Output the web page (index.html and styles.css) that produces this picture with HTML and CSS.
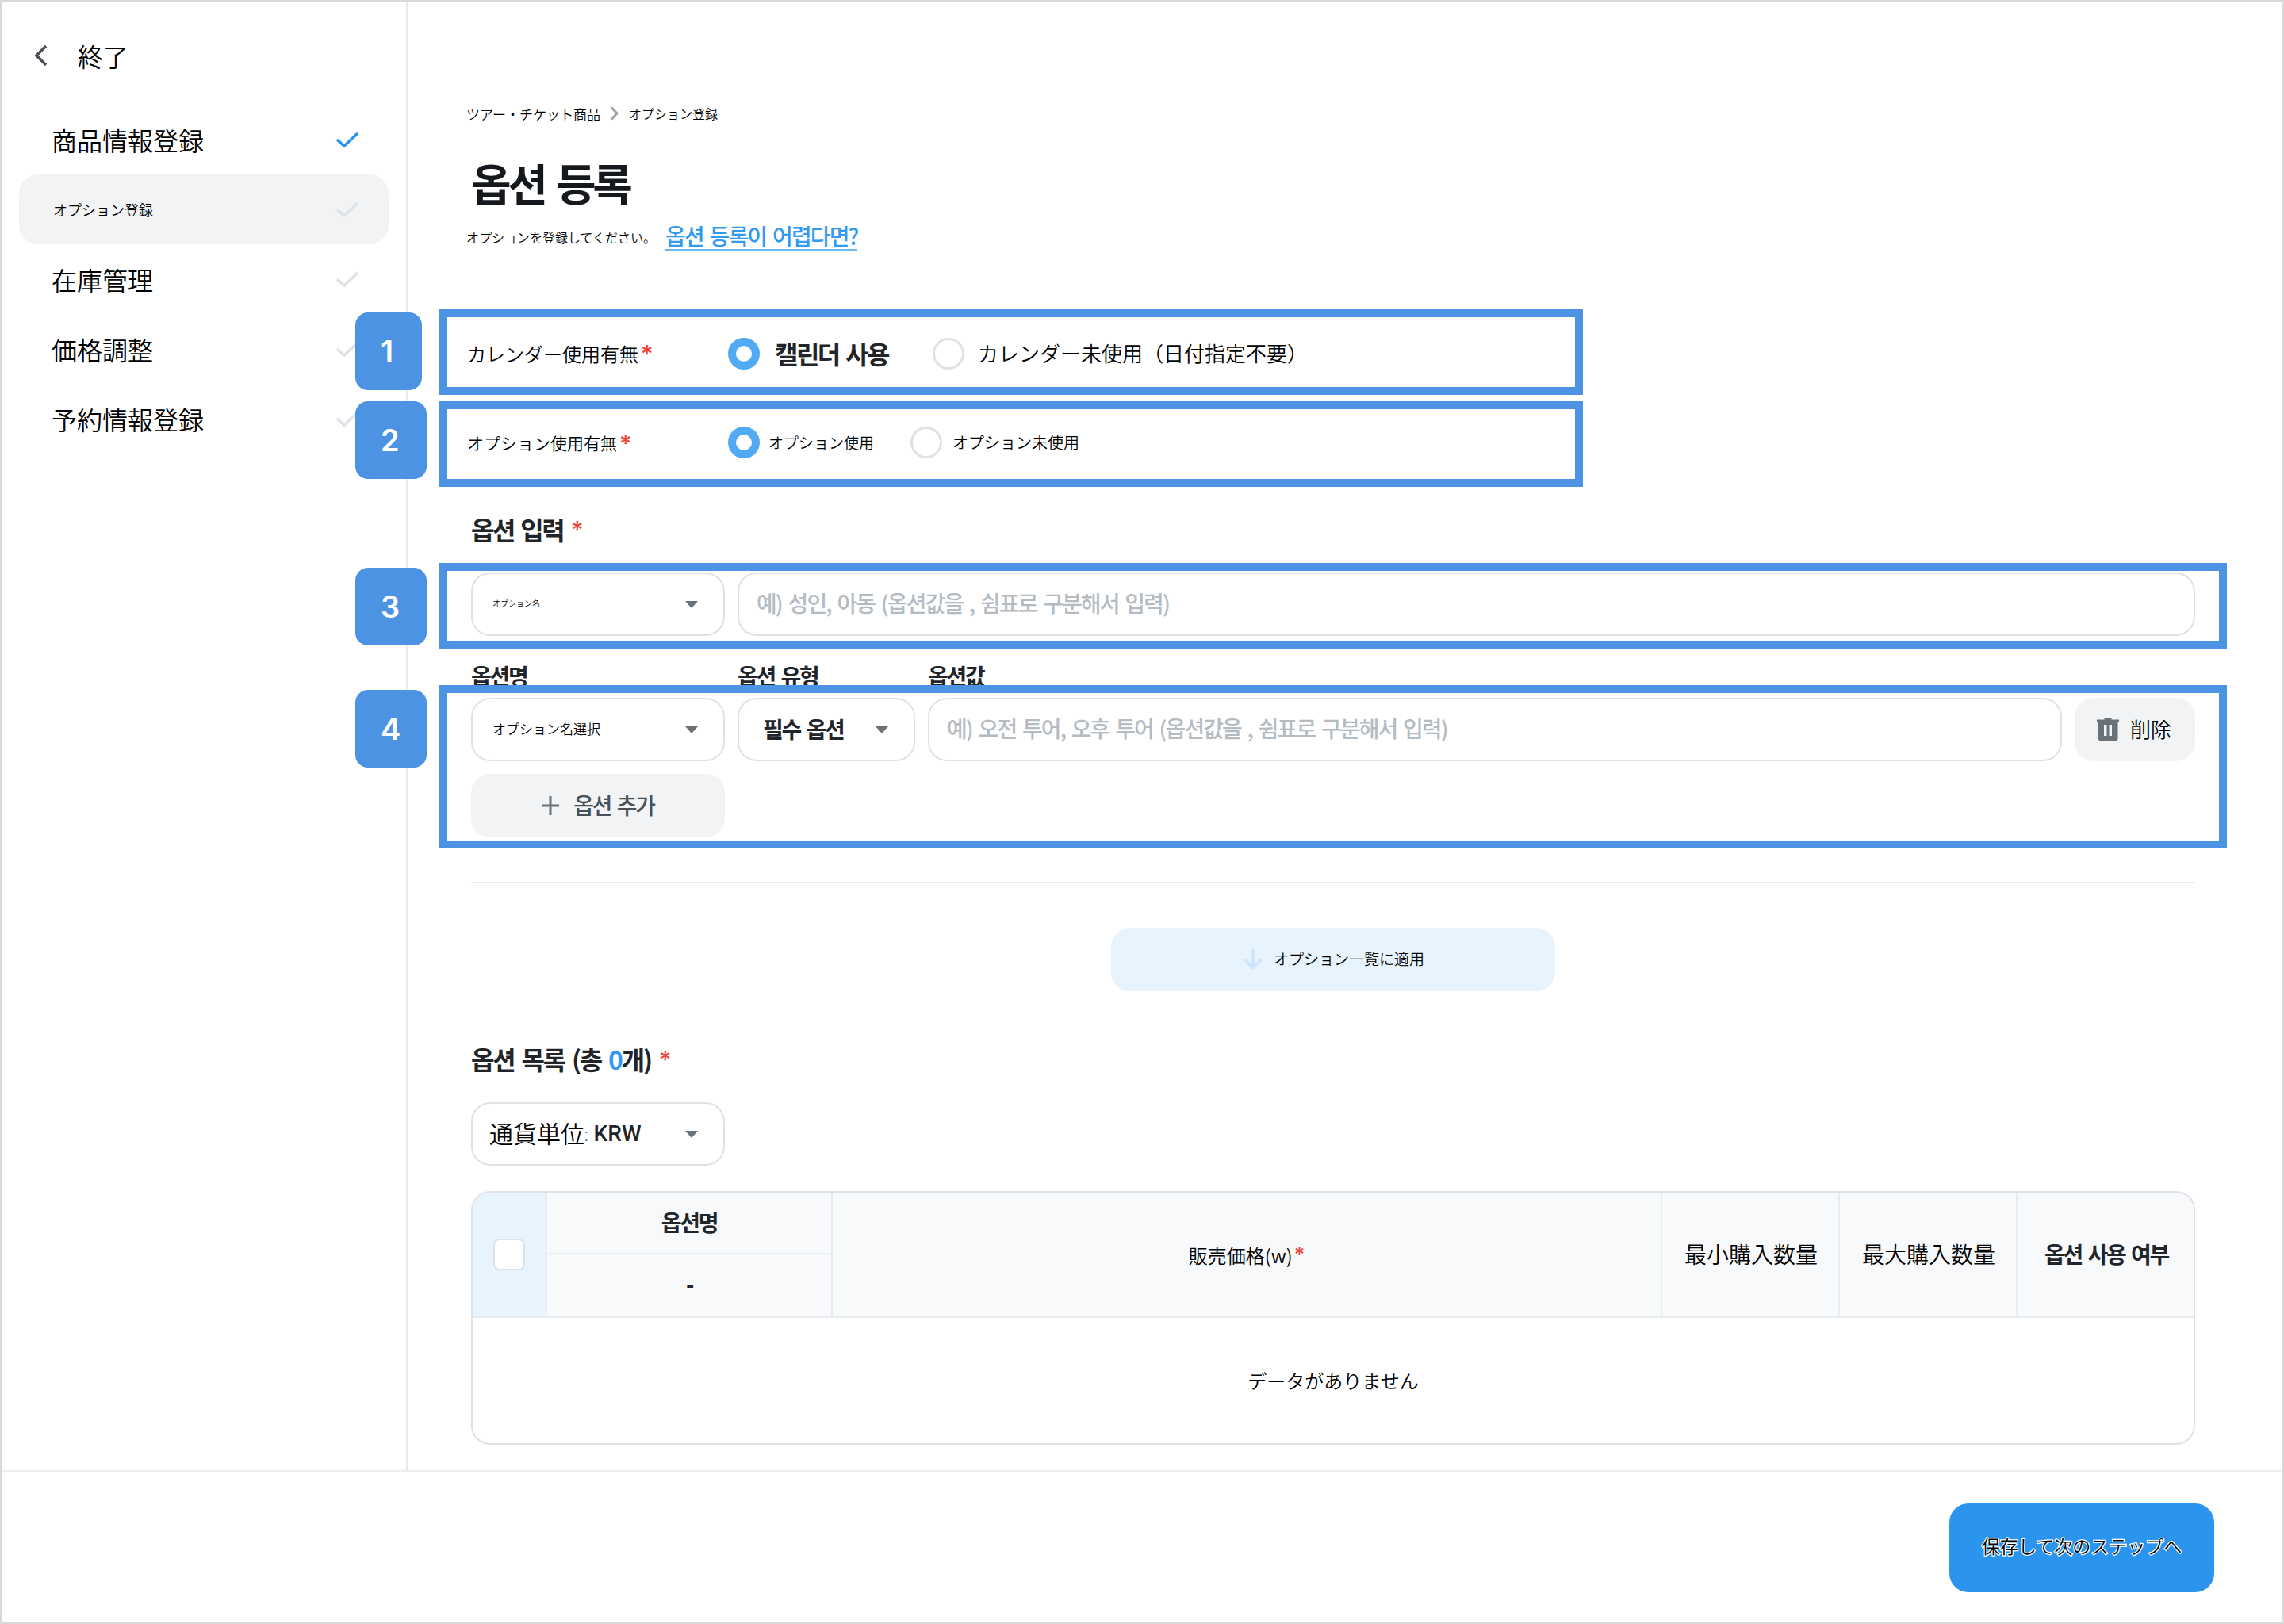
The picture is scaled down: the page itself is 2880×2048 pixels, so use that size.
FILE: index.html
```html
<!DOCTYPE html>
<html lang="ja">
<head>
  <meta charset="UTF-8">
  <meta name="viewport" content="width=device-width, initial-scale=1.0">
  <title>オプション登録</title>
  <link rel="stylesheet" href="styles.css">
</head>
<body>

  <div class="page">
    <div class="content">

      <!-- Sidebar -->
      <aside class="sidebar">
        <div class="sidebar-back">
          <svg width="18" height="28" viewBox="0 0 18 28" fill="none" stroke="#495057" stroke-width="3.6"><path d="M16 2L4 14l12 12"/></svg>
          <span>終了</span>
        </div>
        <nav class="menu">
          <div class="menu-item done">
            <span>商品情報登録</span>
            <svg class="check" viewBox="0 0 30 22"><path d="M2 11l9 8L28 3"/></svg>
          </div>
          <div class="menu-item active">
            <span>オプション登録</span>
            <svg class="check" viewBox="0 0 30 22"><path d="M2 11l9 8L28 3"/></svg>
          </div>
          <div class="menu-item">
            <span>在庫管理</span>
            <svg class="check" viewBox="0 0 30 22"><path d="M2 11l9 8L28 3"/></svg>
          </div>
          <div class="menu-item">
            <span>価格調整</span>
            <svg class="check" viewBox="0 0 30 22"><path d="M2 11l9 8L28 3"/></svg>
          </div>
          <div class="menu-item">
            <span>予約情報登録</span>
            <svg class="check" viewBox="0 0 30 22"><path d="M2 11l9 8L28 3"/></svg>
          </div>
        </nav>
      </aside>

      <main class="main">
        <div class="breadcrumb">
          <span class="crumb-parent">ツアー・チケット商品</span>
          <svg width="12" height="18" viewBox="0 0 12 18" fill="none" stroke="#9aa2aa" stroke-width="3"><path d="M2 1.5L9 9l-7 7.5"/></svg>
          <span>オプション登録</span>
        </div>
        <h1 class="ko">옵션 등록</h1>
        <div class="subtitle">
          <span>オプションを登録してください。</span>
          <a class="ko help-link">옵션 등록이 어렵다면?</a>
        </div>

        <!-- Step 1 -->
        <section class="step step-calendar">
          <span class="step-num narrow">1</span>
          <div class="field-label">カレンダー使用有無<span class="required">*</span></div>
          <div class="option option-first"><span class="radio checked"></span><span class="ko text">캘린더 사용</span></div>
          <div class="option"><span class="radio"></span><span class="text">カレンダー未使用（日付指定不要）</span></div>
        </section>

        <!-- Step 2 -->
        <section class="step step-option">
          <span class="step-num">2</span>
          <div class="field-label">オプション使用有無<span class="required">*</span></div>
          <div class="option option-first"><span class="radio checked"></span><span class="text">オプション使用</span></div>
          <div class="option"><span class="radio"></span><span class="text">オプション未使用</span></div>
        </section>

        <h2 class="ko title-input">옵션 입력<span class="required">*</span></h2>

        <!-- Step 3 -->
        <section class="step step-wide step-name">
          <span class="step-num">3</span>
          <div class="row">
            <div class="select select-name"><span class="tiny text">オプション名</span><i class="caret"></i></div>
            <div class="input ko">예) 성인, 아동 (옵션값을 , 쉼표로 구분해서 입력)</div>
          </div>
        </section>

        <div class="column-labels ko">
          <span>옵션명</span>
          <span>옵션 유형</span>
          <span>옵션값</span>
        </div>

        <!-- Step 4 -->
        <section class="step step-wide step-values">
          <span class="step-num">4</span>
          <div class="row">
            <div class="select select-name"><span class="text">オプション名選択</span><i class="caret"></i></div>
            <div class="select select-type"><span class="ko text">필수 옵션</span><i class="caret"></i></div>
            <div class="input ko">예) 오전 투어, 오후 투어 (옵션값을 , 쉼표로 구분해서 입력)</div>
            <div class="delete-btn">
              <svg width="28" height="28" viewBox="0 0 28 28"><path fill="#697179" fill-rule="evenodd" d="M0 1.500h9.500V0h9v1.500H28V4h-1.500v22.500L25 28H3.500L2 26.500V4H0zM9 8v14h3.500V8zm6.500 0v14H19V8z"/></svg>
              <span class="text">削除</span>
            </div>
          </div>
          <div class="add-btn">
            <svg width="22" height="24" viewBox="0 0 22 24" stroke="#697179" stroke-width="3"><path d="M11 0v24M0 12h22"/></svg>
            <span class="ko text">옵션 추가</span>
          </div>
        </section>

        <hr class="divider">

        <div class="apply-btn">
          <svg width="24" height="26" viewBox="0 0 24 26" fill="none" stroke="#cae6fd" stroke-width="3.6"><path d="M12 0v23M1.500 13L12 23.500 22.500 13"/></svg>
          <span class="text">オプション一覧に適用</span>
        </div>

        <h2 class="ko title-list">옵션 목록 (총 <em>0</em>개)<span class="required">*</span></h2>

        <div class="select select-currency">
          <span class="text">通貨単位</span><span class="currency"><small>:</small> KRW</span><i class="caret"></i>
        </div>

        <div class="table">
          <div class="table-head">
            <div class="cell cell-check"><span class="checkbox"></span></div>
            <div class="cell cell-name ko"><span>옵션명</span><span>-</span></div>
            <div class="cell cell-price">販売価格(w)<span class="required">*</span></div>
            <div class="cell">最小購入数量</div>
            <div class="cell">最大購入数量</div>
            <div class="cell ko">옵션 사용 여부</div>
          </div>
          <div class="table-empty">データがありません</div>
        </div>
      </main>
    </div>

    <footer class="footer">
      <div class="save-btn">保存して次のステップへ</div>
    </footer>
  </div>

</body>
</html>
```
FILE: styles.css
```css
* {
  margin: 0;
  padding: 0;
  box-sizing: border-box;
}

body {
  font-family: "Noto Sans CJK JP", sans-serif;
  font-weight: 350;
  color: #000;
  background: #fff;
}

.ko {
  font-family: "Noto Sans CJK KR", sans-serif;
  font-weight: 700;
  letter-spacing: -0.08em;
  word-spacing: 0.12em;
  color: #212529;
}

.page {
  width: 2880px;
  height: 2048px;
  border: 2px solid #d8d8d8;
  display: flex;
  flex-direction: column;
  overflow: hidden;
}

.content {
  display: flex;
  height: 1852px;
}

/* Sidebar */
.sidebar {
  width: 512px;
  flex: none;
  padding: 46px 22px 0;
  border-right: 2px solid #e9ecef;
}

.sidebar-back {
  display: flex;
  align-items: center;
  gap: 38px;
  height: 48px;
  padding-left: 18px;
  font-size: 32px;
}

.sidebar-back svg {
  margin-top: -4px;
}

.sidebar-back span {
  margin-top: -5px;
}

.menu {
  margin-top: 36px;
}

.menu-item {
  display: flex;
  justify-content: space-between;
  align-items: center;
  height: 88px;
  width: 466px;
  padding: 0 37px 0 41px;
  border-radius: 24px;
  font-size: 32px;
}

.menu-item.active {
  background: #f1f3f5;
  font-size: 18px;
  padding-left: 43px;
}

.check {
  width: 30px;
  height: 22px;
  margin-top: -1px;
  fill: none;
  stroke: #dee2e6;
  stroke-width: 3.6;
}

.done .check {
  stroke: #2b95ee;
}

/* Main column */
.main {
  flex: 1;
  min-width: 0;
  padding: 129px 110px 0 80px;
}

.breadcrumb {
  display: flex;
  align-items: center;
  height: 24px;
  margin-left: -6px;
  font-size: 16px;
}

.breadcrumb svg {
  margin: 0 12px 0 12px;
}

.crumb-parent {
  font-size: 17px;
}

h1.ko {
  height: 80px;
  margin-top: 34px;
  line-height: 80px;
  font-size: 55px;
  color: #15181c;
}

.subtitle {
  display: flex;
  align-items: center;
  height: 40px;
  margin: 10px 0 71px -6px;
  font-size: 16px;
}

.help-link {
  margin-left: 12px;
  height: 36px;
  line-height: 32px;
  font-size: 28px;
  font-weight: 500;
  letter-spacing: -0.067em;
  color: #339af0;
  border-bottom: 3px solid #6db6f4;
}

.required {
  align-self: flex-start;
  font-family: Inter, sans-serif;
  font-size: 30px;
  font-weight: 500;
  line-height: 1;
  letter-spacing: 0;
  color: #f04438;
}

/* Numbered, outlined steps */
.step {
  position: relative;
  width: 1442px;
  height: 108px;
  margin-left: -40px;
  padding-left: 25px;
  display: flex;
  align-items: center;
  background: #fff;
  border: 10px solid #4c93e4;
}

.step-num {
  position: absolute;
  left: -116px;
  top: -4px;
  width: 90px;
  height: 98px;
  padding-left: 32px;
  border-radius: 16px;
  background: #4c93e4;
  color: #fff;
  font-family: Inter, sans-serif;
  font-size: 38px;
  font-weight: 600;
  line-height: 99px;
}

.step-num.narrow {
  width: 84px;
  top: -6px;
}

.step-calendar {
  padding-top: 4px;
}

.step-option {
  margin-top: 8px;
  padding-bottom: 4px;
}

.step-option .step-num {
  top: -10px;
}

.text {
  margin-top: -3px;
}

.field-label {
  display: flex;
  width: 329px;
  margin-top: -2px;
  font-size: 24px;
}

.field-label .required {
  margin: 3px 0 0 3px;
}

.step-option .field-label {
  margin-top: 0;
  font-size: 21px;
}

.step-option .field-label .required {
  margin-top: 1px;
}

.option {
  display: flex;
  align-items: center;
  gap: 17px;
  font-size: 26px;
}

.option .ko {
  margin-left: 2px;
  font-size: 32px;
}

.option-first {
  width: 258px;
}

.step-option .option {
  gap: 13px;
  font-size: 20px;
}

.step-option .option-first {
  width: 230px;
  gap: 11px;
  font-size: 19px;
}

.step-option .text {
  margin-top: -1px;
}

.radio {
  width: 40px;
  height: 40px;
  border: 3px solid #dee2e6;
  border-radius: 50%;
}

.radio.checked {
  border: 10px solid #50abf4;
}

h2.ko {
  display: flex;
  height: 40px;
  line-height: 38px;
  font-size: 32px;
  white-space: pre;
}

h2 .required {
  margin: 5px 0 0 10px;
}

.title-input {
  margin: 34px 0 22px;
}

.step-wide {
  width: 2254px;
  flex-direction: column;
  align-items: flex-start;
  padding: 2px 30px 0;
}

.row {
  display: flex;
  gap: 16px;
  width: 100%;
}

.select,
.input {
  display: flex;
  align-items: center;
  height: 80px;
  border: 2px solid #dee2e6;
  border-radius: 24px;
}

.select {
  justify-content: space-between;
  padding: 0 32px 0 25px;
  font-size: 17px;
}

.select .ko {
  font-size: 28px;
}

.select-name {
  width: 320px;
}

.select-type {
  width: 224px;
  padding-left: 30px;
}

.tiny {
  font-size: 10px;
}

.caret {
  border: 8px solid transparent;
  border-top: 9px solid #697179;
  border-bottom: 0;
}

.input {
  flex: 1;
  padding: 0 0 4px 22px;
  font-size: 28px;
  font-weight: 500;
  letter-spacing: -0.069em;
  color: #b4bbc2;
}

.column-labels {
  display: grid;
  grid-template-columns: 336px 240px 1fr;
  height: 32px;
  margin-top: 14px;
  line-height: 40px;
  font-size: 28px;
}

.step-values {
  height: 206px;
  padding-top: 6px;
}

.delete-btn {
  display: flex;
  align-items: center;
  gap: 14px;
  width: 152px;
  padding-left: 28px;
  border-radius: 24px;
  background: #f1f3f5;
  font-size: 26px;
}

.add-btn {
  display: flex;
  justify-content: center;
  align-items: center;
  gap: 18px;
  width: 320px;
  height: 80px;
  margin-top: 16px;
  border-radius: 24px;
  background: #f1f3f5;
  font-size: 28px;
}

.add-btn .ko {
  font-weight: 500;
  color: #495057;
}

.divider {
  height: 2px;
  margin: 42px 0 56px;
  border: 0;
  background: #e9ecef;
}

.apply-btn {
  display: flex;
  justify-content: center;
  align-items: center;
  gap: 14px;
  width: 560px;
  height: 80px;
  margin: 0 auto;
  padding-left: 2px;
  border-radius: 24px;
  background: #e7f3fd;
  font-size: 19px;
}

.title-list {
  margin: 66px 0 34px;
}

.title-list.ko {
  letter-spacing: -0.068em;
}

.title-list em {
  font-style: normal;
  color: #339af0;
}

.select-currency {
  width: 320px;
  padding-left: 21px;
  font-size: 30px;
}

.select-currency .text {
  margin-top: -5px;
}

.currency {
  flex: 1;
  font-family: Roboto, sans-serif;
  font-size: 28px;
  font-weight: 500;
  margin-top: -2px;
  color: #212529;
}

.currency small {
  font-weight: 300;
  font-size: 22px;
}

/* Option table */
.table {
  height: 320px;
  margin-top: 32px;
  border: 2px solid #dee2e6;
  border-radius: 24px;
  overflow: hidden;
}

.table-head {
  display: grid;
  grid-template-columns: 94px 360px 1fr 224px 224px 222px;
  height: 158px;
  background: #f8f9fb;
  border-bottom: 2px solid #e9ecef;
}

.cell {
  display: flex;
  justify-content: center;
  align-items: center;
  padding: 0 0 2px 2px;
  font-size: 28px;
  border-right: 2px solid #e9ecef;
}

.cell:last-child {
  border-right: 0;
}

.cell-check {
  padding: 0;
  background: #e7f3fd;
}

.checkbox {
  width: 40px;
  height: 40px;
  border: 2px solid #dee2e6;
  border-radius: 8px;
  background: #fff;
}

.cell-name {
  display: grid;
  grid-template-rows: 78px 78px;
  justify-content: stretch;
  align-items: stretch;
  padding: 0;
  text-align: center;
  line-height: 75px;
}

.cell-name span:first-child {
  border-bottom: 2px solid #e9ecef;
}

.cell-price {
  padding: 0;
  font-size: 24px;
}

.cell-price .required {
  align-self: center;
  margin: -1px 0 0 2px;
  font-size: 26px;
}

.table-empty {
  display: flex;
  justify-content: center;
  align-items: center;
  height: 158px;
  padding-bottom: 2px;
  font-size: 24px;
}

/* Footer */
.footer {
  flex: 1;
  display: flex;
  justify-content: flex-end;
  padding: 40px 86px 0 0;
  border-top: 2px solid #eee;
  box-shadow: 0 -2px 8px rgba(0, 0, 0, 0.03);
}

.save-btn {
  width: 334px;
  height: 112px;
  border-radius: 24px;
  background: #2b95ee;
  font-size: 23px;
  line-height: 107px;
  text-align: center;
  -webkit-text-stroke: 2.5px #fff;
  paint-order: stroke fill;
}
```
